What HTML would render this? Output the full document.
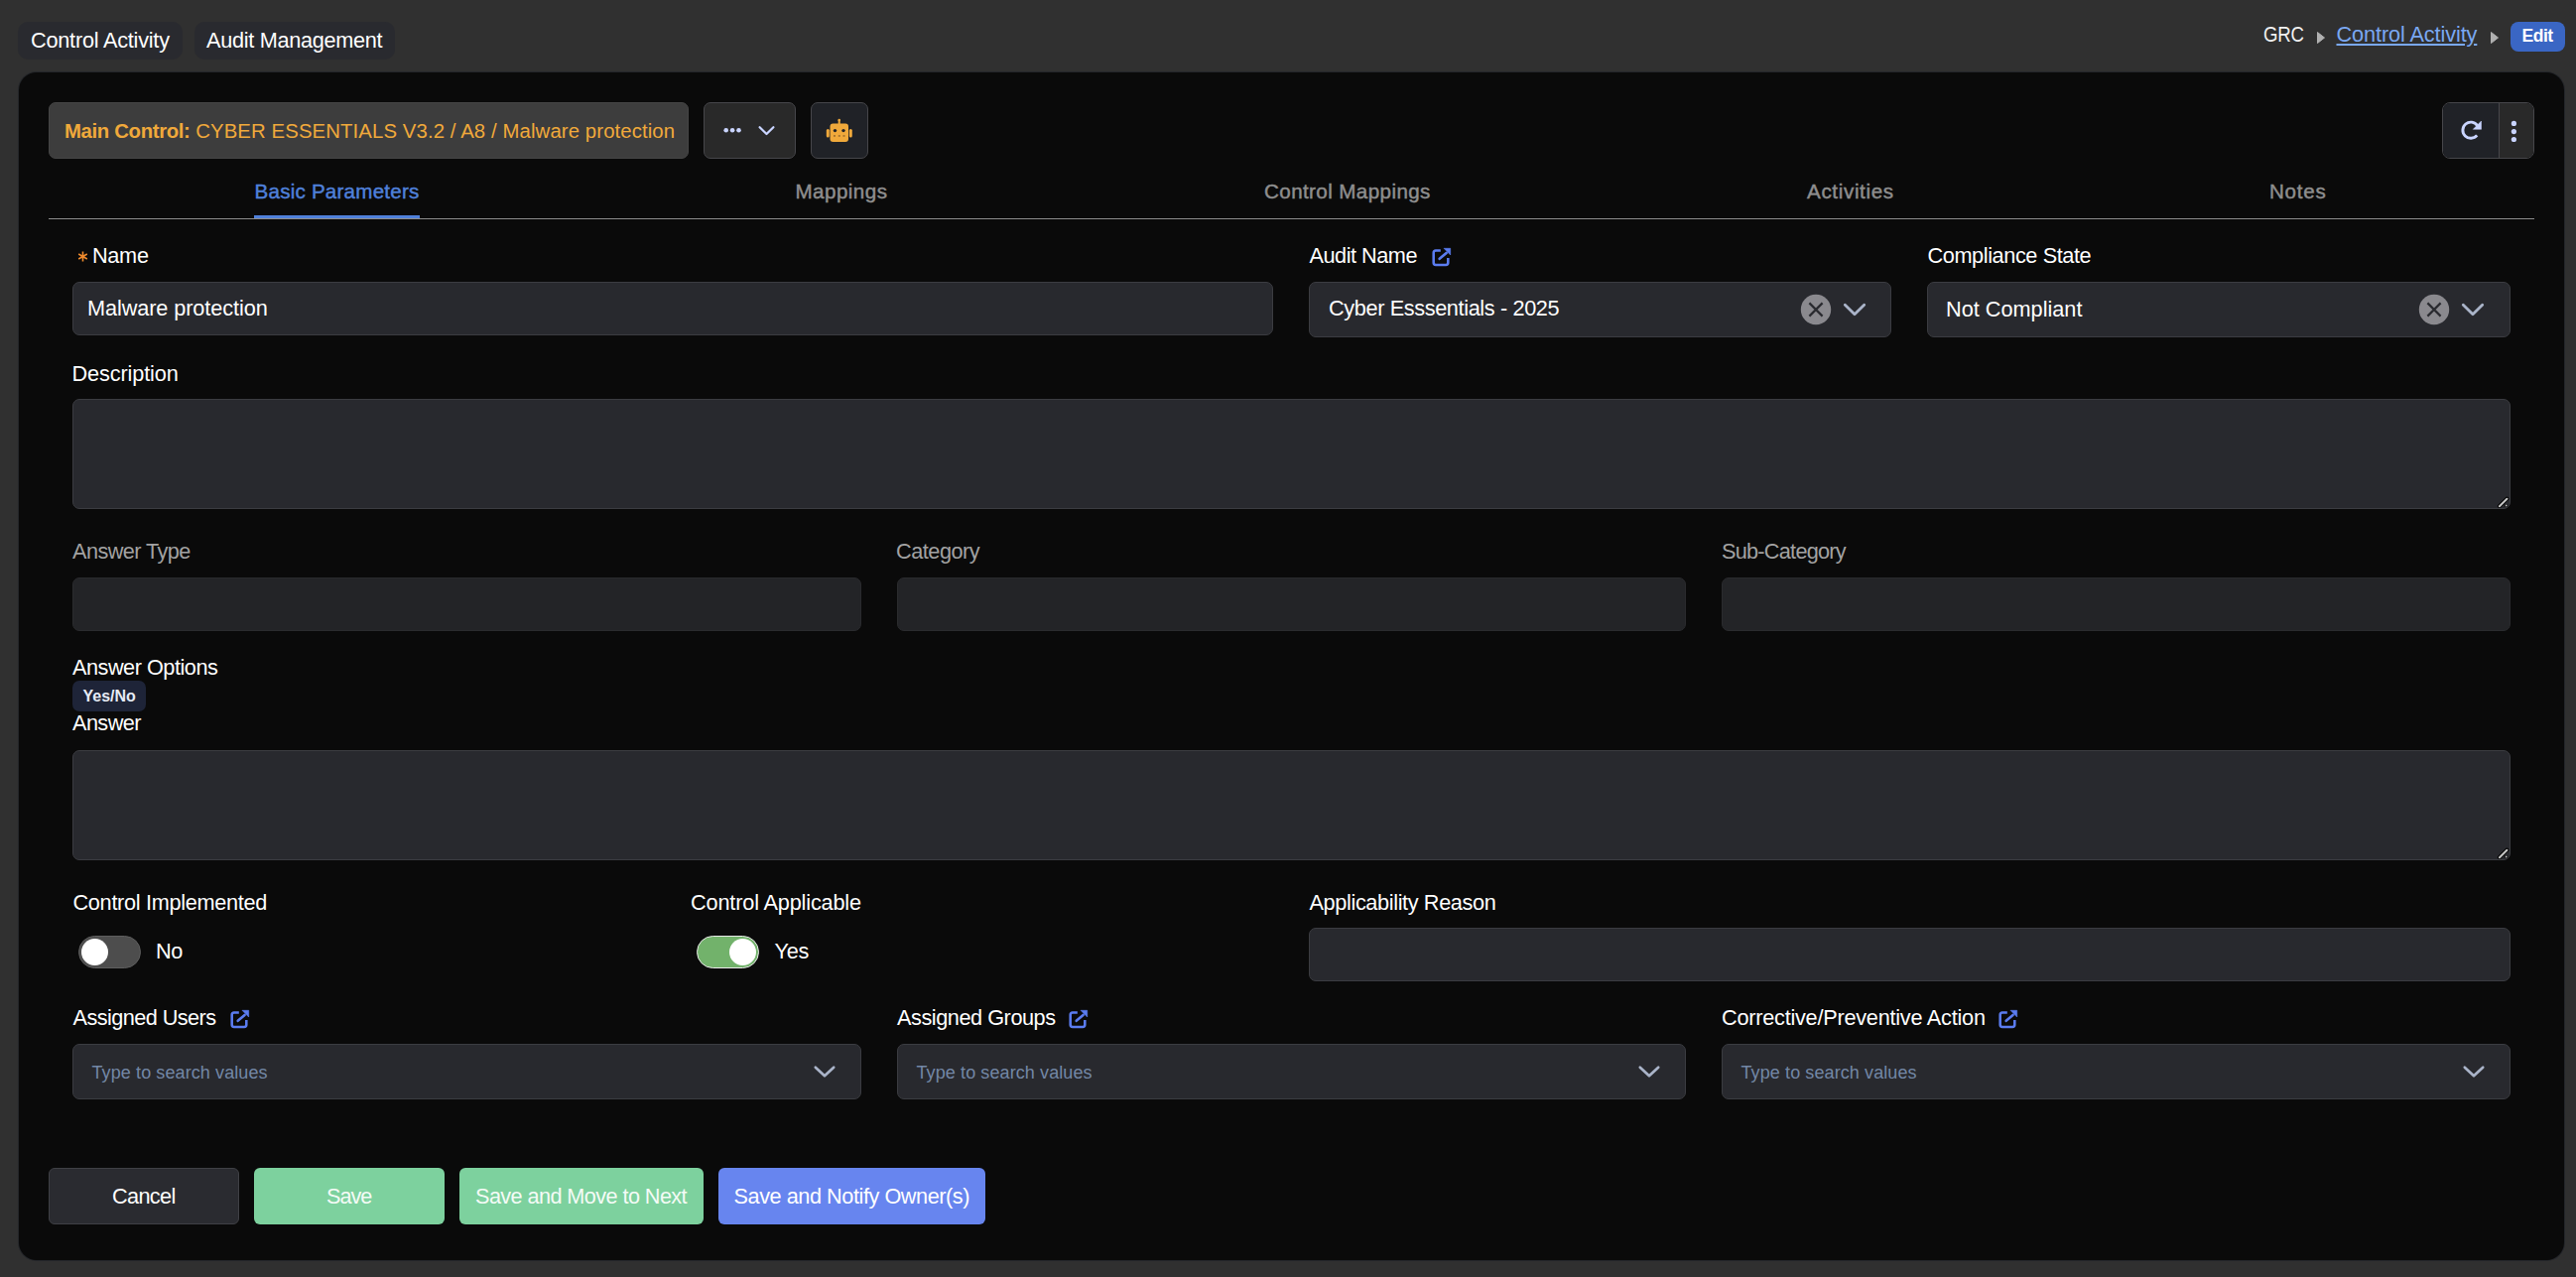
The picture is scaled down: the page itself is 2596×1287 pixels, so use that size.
<!DOCTYPE html>
<html><head><meta charset="utf-8">
<style>
*{box-sizing:border-box;margin:0;padding:0}
html,body{width:2596px;height:1287px;overflow:hidden;background:#303030;font-family:"Liberation Sans",sans-serif;color:#fff}
.a{position:absolute}
.t{position:absolute;white-space:nowrap;line-height:1}
</style></head><body>
<div class="a" style="left:18px;top:22px;width:166px;height:38px;background:#292a2f;border-radius:10px;"></div>
<div class="t" style="left:31px;top:29.63px;font-size:21.7px;color:#fff;font-weight:400;letter-spacing:-0.23px;">Control Activity</div>
<div class="a" style="left:196px;top:22px;width:202px;height:38px;background:#292a2f;border-radius:10px;"></div>
<div class="t" style="left:208px;top:29.63px;font-size:21.7px;color:#fff;font-weight:400;letter-spacing:-0.3px;">Audit Management</div>
<div class="t" style="left:2281px;top:23.63px;font-size:21.7px;color:#f0f0f0;font-weight:400;letter-spacing:-0.3px;transform:scaleX(0.86);transform-origin:0 0;">GRC</div>
<svg class="a" style="left:2334px;top:31px" width="11" height="14" viewBox="0 0 11 14"><path d="M1.5 1.5 L8.5 7 L1.5 12.5 Z" fill="#b0b0b0" stroke="#b0b0b0" stroke-width="1" stroke-linejoin="round"/></svg>
<div class="t" style="left:2354.5px;top:23.63px;font-size:21.7px;color:#7aa8f2;font-weight:400;letter-spacing:-0.1px;text-decoration:underline;text-underline-offset:2px;">Control Activity</div>
<svg class="a" style="left:2509px;top:31px" width="11" height="14" viewBox="0 0 11 14"><path d="M1.5 1.5 L8.5 7 L1.5 12.5 Z" fill="#b0b0b0" stroke="#b0b0b0" stroke-width="1" stroke-linejoin="round"/></svg>
<div class="a" style="left:2530px;top:22px;width:55px;height:30px;background:#3a66c4;border-radius:8px;"></div>
<div class="t" style="left:2541.5px;top:28.18px;font-size:17.5px;color:#fff;font-weight:700;letter-spacing:-0.45px;">Edit</div>
<div class="a" style="left:19px;top:73px;width:2565px;height:1197px;background:#0a0a0a;border-radius:18px;box-shadow:0 0 0 1px #24262a"></div>
<div class="a" style="left:49px;top:103px;width:645px;height:57px;background:#3d3d3d;border-radius:7px;border:1px solid #454545;"></div>
<div class="t" style="left:65px;top:121.77px;font-size:20.35px;color:#f0a93b"><b style="letter-spacing:-0.35px">Main Control:</b> <span style="letter-spacing:0.1px">CYBER ESSENTIALS V3.2 / A8 / Malware protection</span></div>
<div class="a" style="left:709px;top:103px;width:93px;height:57px;background:#292929;border-radius:7px;border:1px solid #46464a;"></div>
<svg class="a" style="left:709px;top:103px" width="93" height="57" viewBox="0 0 93 57">
  <circle cx="22.7" cy="28.3" r="2.3" fill="#c9d4ff"/><circle cx="29.1" cy="28.3" r="2.3" fill="#c9d4ff"/><circle cx="35.5" cy="28.3" r="2.3" fill="#c9d4ff"/>
  <path d="M56.6 25.2 L63.5 32 L70.4 25.2" stroke="#c9d4ff" stroke-width="2.3" fill="none" stroke-linecap="round" stroke-linejoin="round"/>
</svg>
<div class="a" style="left:817px;top:103px;width:58px;height:57px;background:#202227;border-radius:7px;border:1px solid #46464a;"></div>
<svg class="a" style="left:817px;top:103px" width="58" height="57" viewBox="0 0 58 57">
  <g fill="#f0a93b">
    <rect x="27.7" y="18" width="2" height="5"/>
    <circle cx="28.7" cy="18" r="1.3"/>
    <rect x="19.5" y="21.5" width="18.5" height="18.5" rx="3"/>
    <rect x="15.8" y="27" width="3" height="8.5" rx="1.5"/>
    <rect x="38.8" y="27" width="3" height="8.5" rx="1.5"/>
  </g>
  <circle cx="24.5" cy="28.6" r="1.7" fill="#202227"/><circle cx="33" cy="28.6" r="1.7" fill="#202227"/>
  <rect x="23" y="33.2" width="2" height="1.5" fill="#9a6a2a"/><rect x="27.8" y="33.2" width="2" height="1.5" fill="#9a6a2a"/><rect x="32.5" y="33.2" width="2" height="1.5" fill="#9a6a2a"/>
</svg>
<div class="a" style="left:2461px;top:103px;width:93px;height:57px;border:1px solid #46464a;border-radius:8px;overflow:hidden;display:flex">
  <div style="width:57px;height:100%;background:#202227;border-right:1px solid #46464a"></div>
  <div style="flex:1;height:100%;background:#292929"></div>
</div>
<svg class="a" style="left:2461px;top:103px" width="93" height="57" viewBox="0 0 93 57">
  <path d="M35.63 23.55 A8.1 8.1 0 1 0 35.2 33.4" stroke="#c9d4ff" stroke-width="2.9" fill="none"/>
  <path d="M39.5 19 L39.5 27.3 L31.3 27.3 Z" fill="#c9d4ff" stroke="#c9d4ff" stroke-width="0.5" stroke-linejoin="round"/>
  <circle cx="72.4" cy="21.4" r="2.6" fill="#c9d4ff"/><circle cx="72.4" cy="29.6" r="2.6" fill="#c9d4ff"/><circle cx="72.4" cy="37.5" r="2.6" fill="#c9d4ff"/>
</svg>
<div class="t" style="left:256.5px;top:182.56px;font-size:20.6px;color:#4f80da;font-weight:400;letter-spacing:0.22px;-webkit-text-stroke:0.45px #4f80da;">Basic Parameters</div>
<div class="t" style="left:801.5px;top:182.56px;font-size:20.6px;color:#8e8e8e;font-weight:400;letter-spacing:0.45px;-webkit-text-stroke:0.45px #8e8e8e;">Mappings</div>
<div class="t" style="left:1274px;top:182.56px;font-size:20.6px;color:#8e8e8e;font-weight:400;letter-spacing:0.4px;-webkit-text-stroke:0.45px #8e8e8e;">Control Mappings</div>
<div class="t" style="left:1821px;top:182.56px;font-size:20.6px;color:#8e8e8e;font-weight:400;letter-spacing:0.65px;-webkit-text-stroke:0.45px #8e8e8e;">Activities</div>
<div class="t" style="left:2287px;top:182.56px;font-size:20.6px;color:#8e8e8e;font-weight:400;letter-spacing:0.75px;-webkit-text-stroke:0.45px #8e8e8e;">Notes</div>
<div class="a" style="left:49px;top:220px;width:2505px;height:1px;background:#8c8c8c;border-radius:0px;"></div>
<div class="a" style="left:256px;top:217px;width:167px;height:3px;background:#4f80da;border-radius:0px;"></div>
<svg class="a" style="left:77px;top:252px" width="13" height="13" viewBox="0 0 13 13"><path d="M6.5 1.5 V11.5 M2.2 4 L10.8 9 M10.8 4 L2.2 9" stroke="#f08a2c" stroke-width="1.6"/></svg>
<div class="t" style="left:93px;top:246.63px;font-size:21.7px;color:#fff;font-weight:400;letter-spacing:-0.3px;">Name</div>
<div class="a" style="left:73px;top:284px;width:1210px;height:54px;background:#28292e;border-radius:7px;border:1px solid #3b3c41;"></div>
<div class="t" style="left:88px;top:299.63px;font-size:21.7px;color:#fff;font-weight:400;letter-spacing:-0.09px;">Malware protection</div>
<div class="t" style="left:1319.5px;top:246.63px;font-size:21.7px;color:#fff;font-weight:400;letter-spacing:-0.48px;">Audit Name</div>
<svg class="a" style="left:1441.8px;top:248.1px" width="22" height="22" viewBox="0 0 22 22"><path d="M9.8 4.5 H4.9 Q2.7 4.5 2.7 6.7 V16.8 Q2.7 19 4.9 19 H15.1 Q17.3 19 17.3 16.8 V12" stroke="#5b7cf0" stroke-width="2.55" fill="none"/><path d="M8.7 12.8 L15.6 6.9" stroke="#5b7cf0" stroke-width="2.6" stroke-linecap="round"/><path d="M13 2.3 H19.7 V9 Z" fill="#5b7cf0" stroke="#5b7cf0" stroke-width="0.6" stroke-linejoin="round"/></svg>
<div class="a" style="left:1319px;top:284px;width:587px;height:56px;background:#28292e;border-radius:7px;border:1px solid #3b3c41;"></div>
<div class="t" style="left:1339px;top:300.23px;font-size:21.7px;color:#fff;font-weight:400;letter-spacing:-0.37px;">Cyber Esssentials - 2025</div>
<svg class="a" style="left:1810.4px;top:292px" width="40" height="40" viewBox="0 0 40 40"><circle cx="20" cy="20" r="15.2" fill="#8a898e"/><path d="M13.4 13.4 L26.6 26.6 M26.6 13.4 L13.4 26.6" stroke="#2a2b30" stroke-width="2.2"/></svg>
<svg class="a" style="left:1853px;top:297.5px" width="32" height="28" viewBox="0 0 32 28"><path d="M6.300000000000001 9.15 L16 18.85 L25.7 9.15" stroke="#aab4c9" stroke-width="2.8" fill="none" stroke-linecap="round" stroke-linejoin="round"/></svg>
<div class="t" style="left:1942.5px;top:246.63px;font-size:21.7px;color:#fff;font-weight:400;letter-spacing:-0.4px;">Compliance State</div>
<div class="a" style="left:1942px;top:284px;width:588px;height:56px;background:#28292e;border-radius:7px;border:1px solid #3b3c41;"></div>
<div class="t" style="left:1961px;top:300.63px;font-size:21.7px;color:#fff;font-weight:400;letter-spacing:0px;">Not Compliant</div>
<svg class="a" style="left:2433.4px;top:292px" width="40" height="40" viewBox="0 0 40 40"><circle cx="20" cy="20" r="15.2" fill="#8a898e"/><path d="M13.4 13.4 L26.6 26.6 M26.6 13.4 L13.4 26.6" stroke="#2a2b30" stroke-width="2.2"/></svg>
<svg class="a" style="left:2476px;top:297.5px" width="32" height="28" viewBox="0 0 32 28"><path d="M6.300000000000001 9.15 L16 18.85 L25.7 9.15" stroke="#aab4c9" stroke-width="2.8" fill="none" stroke-linecap="round" stroke-linejoin="round"/></svg>
<div class="t" style="left:72.5px;top:365.63px;font-size:21.7px;color:#fff;font-weight:400;letter-spacing:-0.12px;">Description</div>
<div class="a" style="left:73px;top:402px;width:2457px;height:111px;background:#28292e;border-radius:7px;border:1px solid #3b3c41;"></div>
<svg class="a" style="left:2515px;top:498px" width="14" height="14" viewBox="0 0 14 14"><path d="M3.9 12.2 L11.4 4.7" stroke="#000" stroke-width="4" stroke-linecap="round"/><path d="M3.9 12.2 L11.4 4.7" stroke="#c6c6c6" stroke-width="2" stroke-linecap="round"/><circle cx="10.7" cy="11.5" r="1.6" fill="#000"/><circle cx="10.7" cy="11.5" r="0.9" fill="#c6c6c6"/></svg>
<div class="t" style="left:73px;top:544.83px;font-size:21.7px;color:#a2a2a2;font-weight:400;letter-spacing:-0.57px;">Answer Type</div>
<div class="a" style="left:73px;top:582px;width:795px;height:54px;background:#232427;border-radius:7px;border:1px solid #2a2b2e;"></div>
<div class="t" style="left:903px;top:544.83px;font-size:21.7px;color:#a2a2a2;font-weight:400;letter-spacing:-0.47px;">Category</div>
<div class="a" style="left:904px;top:582px;width:795px;height:54px;background:#232427;border-radius:7px;border:1px solid #2a2b2e;"></div>
<div class="t" style="left:1735px;top:544.83px;font-size:21.7px;color:#a2a2a2;font-weight:400;letter-spacing:-0.74px;">Sub-Category</div>
<div class="a" style="left:1735px;top:582px;width:795px;height:54px;background:#232427;border-radius:7px;border:1px solid #2a2b2e;"></div>
<div class="t" style="left:73px;top:661.93px;font-size:21.7px;color:#fff;font-weight:400;letter-spacing:-0.48px;">Answer Options</div>
<div class="a" style="left:73px;top:686px;width:74px;height:30.5px;background:#1e2438;border-radius:7px;"></div>
<div class="t" style="left:83.5px;top:693.95px;font-size:16px;color:#e6ebf5;font-weight:700;letter-spacing:0px;">Yes/No</div>
<div class="t" style="left:73px;top:717.93px;font-size:21.7px;color:#fff;font-weight:400;letter-spacing:-0.58px;">Answer</div>
<div class="a" style="left:73px;top:756px;width:2457px;height:111px;background:#28292e;border-radius:7px;border:1px solid #3b3c41;"></div>
<svg class="a" style="left:2515px;top:852px" width="14" height="14" viewBox="0 0 14 14"><path d="M3.9 12.2 L11.4 4.7" stroke="#000" stroke-width="4" stroke-linecap="round"/><path d="M3.9 12.2 L11.4 4.7" stroke="#c6c6c6" stroke-width="2" stroke-linecap="round"/><circle cx="10.7" cy="11.5" r="1.6" fill="#000"/><circle cx="10.7" cy="11.5" r="0.9" fill="#c6c6c6"/></svg>
<div class="t" style="left:73.5px;top:898.93px;font-size:21.7px;color:#fff;font-weight:400;letter-spacing:-0.3px;">Control Implemented</div>
<div class="a" style="left:79px;top:943px;width:63px;height:33px;background:#4d4d4d;border:1.5px solid #5e5e5e;border-radius:17px"></div>
<div class="a" style="left:82px;top:946px;width:27px;height:27px;background:#fff;border-radius:50%"></div>
<div class="t" style="left:157px;top:948.03px;font-size:21.7px;color:#fff;font-weight:400;letter-spacing:-0.3px;">No</div>
<div class="t" style="left:696px;top:898.93px;font-size:21.7px;color:#fff;font-weight:400;letter-spacing:-0.16px;">Control Applicable</div>
<div class="a" style="left:702px;top:943px;width:63px;height:33px;background:#72b26b;border:1.3px solid #e8e8e8;border-radius:17px;box-shadow:inset 0 0 0 1px #72b26b"></div>
<div class="a" style="left:735px;top:946px;width:27px;height:27px;background:#fff;border-radius:50%"></div>
<div class="t" style="left:780.5px;top:948.03px;font-size:21.7px;color:#fff;font-weight:400;letter-spacing:-0.3px;">Yes</div>
<div class="t" style="left:1319.5px;top:898.93px;font-size:21.7px;color:#fff;font-weight:400;letter-spacing:-0.37px;">Applicability Reason</div>
<div class="a" style="left:1319px;top:935px;width:1211px;height:54px;background:#28292e;border-radius:7px;border:1px solid #3b3c41;"></div>
<div class="t" style="left:73.5px;top:1015.23px;font-size:21.7px;color:#fff;font-weight:400;letter-spacing:-0.56px;">Assigned Users</div>
<svg class="a" style="left:231px;top:1016px" width="22" height="22" viewBox="0 0 22 22"><path d="M9.8 4.5 H4.9 Q2.7 4.5 2.7 6.7 V16.8 Q2.7 19 4.9 19 H15.1 Q17.3 19 17.3 16.8 V12" stroke="#5b7cf0" stroke-width="2.55" fill="none"/><path d="M8.7 12.8 L15.6 6.9" stroke="#5b7cf0" stroke-width="2.6" stroke-linecap="round"/><path d="M13 2.3 H19.7 V9 Z" fill="#5b7cf0" stroke="#5b7cf0" stroke-width="0.6" stroke-linejoin="round"/></svg>
<div class="a" style="left:73px;top:1052px;width:795px;height:56px;background:#28292e;border-radius:7px;border:1px solid #3b3c41;"></div>
<div class="t" style="left:92.5px;top:1072.46px;font-size:18px;color:#7387a6;font-weight:400;letter-spacing:0.1px;">Type to search values</div>
<svg class="a" style="left:815px;top:1065.6px" width="32" height="28" viewBox="0 0 32 28"><path d="M6.800000000000001 9.75 L16 18.25 L25.2 9.75" stroke="#aab4c9" stroke-width="2.7" fill="none" stroke-linecap="round" stroke-linejoin="round"/></svg>
<div class="t" style="left:904px;top:1015.23px;font-size:21.7px;color:#fff;font-weight:400;letter-spacing:-0.45px;">Assigned Groups</div>
<svg class="a" style="left:1075.7px;top:1016px" width="22" height="22" viewBox="0 0 22 22"><path d="M9.8 4.5 H4.9 Q2.7 4.5 2.7 6.7 V16.8 Q2.7 19 4.9 19 H15.1 Q17.3 19 17.3 16.8 V12" stroke="#5b7cf0" stroke-width="2.55" fill="none"/><path d="M8.7 12.8 L15.6 6.9" stroke="#5b7cf0" stroke-width="2.6" stroke-linecap="round"/><path d="M13 2.3 H19.7 V9 Z" fill="#5b7cf0" stroke="#5b7cf0" stroke-width="0.6" stroke-linejoin="round"/></svg>
<div class="a" style="left:904px;top:1052px;width:795px;height:56px;background:#28292e;border-radius:7px;border:1px solid #3b3c41;"></div>
<div class="t" style="left:923.5px;top:1072.46px;font-size:18px;color:#7387a6;font-weight:400;letter-spacing:0.1px;">Type to search values</div>
<svg class="a" style="left:1646px;top:1065.6px" width="32" height="28" viewBox="0 0 32 28"><path d="M6.800000000000001 9.75 L16 18.25 L25.2 9.75" stroke="#aab4c9" stroke-width="2.7" fill="none" stroke-linecap="round" stroke-linejoin="round"/></svg>
<div class="t" style="left:1735px;top:1015.23px;font-size:21.7px;color:#fff;font-weight:400;letter-spacing:-0.24px;">Corrective/Preventive Action</div>
<svg class="a" style="left:2013.2px;top:1016px" width="22" height="22" viewBox="0 0 22 22"><path d="M9.8 4.5 H4.9 Q2.7 4.5 2.7 6.7 V16.8 Q2.7 19 4.9 19 H15.1 Q17.3 19 17.3 16.8 V12" stroke="#5b7cf0" stroke-width="2.55" fill="none"/><path d="M8.7 12.8 L15.6 6.9" stroke="#5b7cf0" stroke-width="2.6" stroke-linecap="round"/><path d="M13 2.3 H19.7 V9 Z" fill="#5b7cf0" stroke="#5b7cf0" stroke-width="0.6" stroke-linejoin="round"/></svg>
<div class="a" style="left:1735px;top:1052px;width:795px;height:56px;background:#28292e;border-radius:7px;border:1px solid #3b3c41;"></div>
<div class="t" style="left:1754.5px;top:1072.46px;font-size:18px;color:#7387a6;font-weight:400;letter-spacing:0.1px;">Type to search values</div>
<svg class="a" style="left:2477px;top:1065.6px" width="32" height="28" viewBox="0 0 32 28"><path d="M6.800000000000001 9.75 L16 18.25 L25.2 9.75" stroke="#aab4c9" stroke-width="2.7" fill="none" stroke-linecap="round" stroke-linejoin="round"/></svg>
<div class="a" style="left:49px;top:1177px;width:192px;height:57px;background:#2a2b30;border-radius:6px;border:1px solid #3f4045;"></div>
<div class="t" style="left:113px;top:1195.23px;font-size:21.7px;color:#fff;font-weight:400;letter-spacing:-0.66px;">Cancel</div>
<div class="a" style="left:256px;top:1177px;width:192px;height:57px;background:#7dd19e;border-radius:6px;"></div>
<div class="t" style="left:329px;top:1195.23px;font-size:21.7px;color:#f4fbf6;font-weight:400;letter-spacing:-1.0px;">Save</div>
<div class="a" style="left:463px;top:1177px;width:246px;height:57px;background:#7dd19e;border-radius:6px;"></div>
<div class="t" style="left:479px;top:1195.23px;font-size:21.7px;color:#f4fbf6;font-weight:400;letter-spacing:-0.59px;">Save and Move to Next</div>
<div class="a" style="left:724px;top:1177px;width:269px;height:57px;background:#6785ef;border-radius:6px;"></div>
<div class="t" style="left:739.5px;top:1195.23px;font-size:21.7px;color:#fff;font-weight:400;letter-spacing:-0.45px;">Save and Notify Owner(s)</div>
</body></html>
